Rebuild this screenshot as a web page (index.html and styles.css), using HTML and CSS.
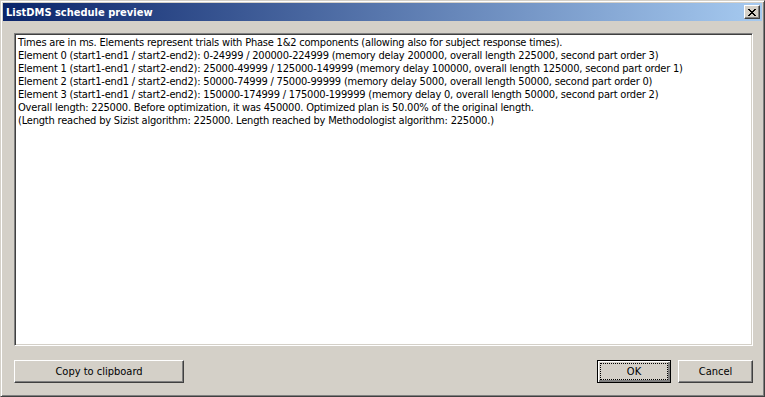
FILE: index.html
```html
<!DOCTYPE html>
<html>
<head>
<meta charset="utf-8">
<link rel="stylesheet" href="styles.css">
</head>
<body>
<div class="window">
  <div class="titlebar">
    <span class="title">ListDMS schedule preview</span>
    <button class="close" aria-label="Close">
      <svg width="8" height="7" viewBox="0 0 8 7"><path d="M0 0h2v1h1v1h2V1h1V0h2v1H7v1H6v1H5v1h1v1h1v1h1v1H6V6H5V5H3v1H2v1H0V6h1V5h1V4h1V3H2V2H1V1H0z" fill="#000"/></svg>
    </button>
  </div>
  <div class="body">
    <div class="textbox">
      <div class="line">Times are in ms. Elements represent trials with Phase 1&amp;2 components (allowing also for subject response times).</div>
      <div class="line">Element 0 (start1-end1 / start2-end2): 0-24999 / 200000-224999 (memory delay 200000, overall length 225000, second part order 3)</div>
      <div class="line">Element 1 (start1-end1 / start2-end2): 25000-49999 / 125000-149999 (memory delay 100000, overall length 125000, second part order 1)</div>
      <div class="line">Element 2 (start1-end1 / start2-end2): 50000-74999 / 75000-99999 (memory delay 5000, overall length 50000, second part order 0)</div>
      <div class="line">Element 3 (start1-end1 / start2-end2): 150000-174999 / 175000-199999 (memory delay 0, overall length 50000, second part order 2)</div>
      <div class="line">Overall length: 225000. Before optimization, it was 450000. Optimized plan is 50.00% of the original length.</div>
      <div class="line">(Length reached by Sizist algorithm: 225000. Length reached by Methodologist algorithm: 225000.)</div>
    </div>
    <div class="buttons">
      <button class="btn copy">Copy to clipboard</button>
      <div class="spacer"></div>
      <button class="btn ok"><span class="focus">OK</span></button>
      <button class="btn cancel">Cancel</button>
    </div>
  </div>
</div>
</body>
</html>
```
FILE: styles.css
```css
html, body {
  margin: 0;
  padding: 0;
  background: #d4d0c8;
}
.window {
  width: 765px;
  height: 397px;
  box-sizing: border-box;
  background: #d4d0c8;
  border-top: 1px solid #d4d0c8;
  border-left: 1px solid #d4d0c8;
  border-right: 1px solid #404040;
  border-bottom: 1px solid #404040;
  box-shadow: inset 1px 1px 0 #ffffff, inset -1px -1px 0 #808080;
  padding: 2px;
  display: flex;
  flex-direction: column;
  font-family: "DejaVu Sans Condensed", "DejaVu Sans", sans-serif;
  font-size: 11px;
  color: #000;
}
.titlebar {
  height: 18px;
  flex: none;
  background: linear-gradient(to right, #0a246a, #a6caf0);
  display: flex;
  align-items: center;
  padding: 0 2px 0 3px;
}
.title {
  flex: 1;
  color: #fff;
  font-weight: bold;
  font-size: 11px;
  white-space: nowrap;
}
.close {
  width: 16px;
  height: 14px;
  padding: 0;
  margin: 0;
  background: #d4d0c8;
  border-top: 1px solid #fff;
  border-left: 1px solid #fff;
  border-right: 1px solid #404040;
  border-bottom: 1px solid #404040;
  box-shadow: inset -1px -1px 0 #808080;
  display: flex;
  align-items: center;
  justify-content: center;
}
.close svg {
  display: block;
}
.body {
  flex: 1;
  display: flex;
  flex-direction: column;
  padding: 12px 9px 11px 11px;
}
.textbox {
  flex: 1;
  background: #fff;
  border-top: 1px solid #808080;
  border-left: 1px solid #808080;
  border-right: 1px solid #fff;
  border-bottom: 1px solid #fff;
  box-shadow: inset 1px 1px 0 #404040, inset -1px -1px 0 #d4d0c8;
  padding: 2px 3px;
  letter-spacing: -0.2px;
}
.line {
  line-height: 13px;
  white-space: nowrap;
}
.buttons {
  flex: none;
  display: flex;
  margin-top: 14px;
  height: 23px;
}
.spacer {
  flex: 1;
}
.btn {
  box-sizing: border-box;
  height: 23px;
  margin: 0;
  padding: 0;
  font-family: inherit;
  font-size: 11px;
  color: #000;
  background: #d4d0c8;
  border-top: 1px solid #fff;
  border-left: 1px solid #fff;
  border-right: 1px solid #404040;
  border-bottom: 1px solid #404040;
  box-shadow: inset -1px -1px 0 #808080;
}
.copy {
  width: 170px;
}
.ok {
  width: 74px;
  margin-right: 7px;
  border: 1px solid #000;
  box-shadow: inset 1px 1px 0 #fff, inset -2px -2px 0 #808080, inset -1px -1px 0 #404040;
  display: flex;
  padding: 3px;
}
.focus {
  flex: 1;
  display: flex;
  align-items: center;
  justify-content: center;
  outline: 1px dotted #000;
  outline-offset: 0;
}
.cancel {
  width: 75px;
}
```
